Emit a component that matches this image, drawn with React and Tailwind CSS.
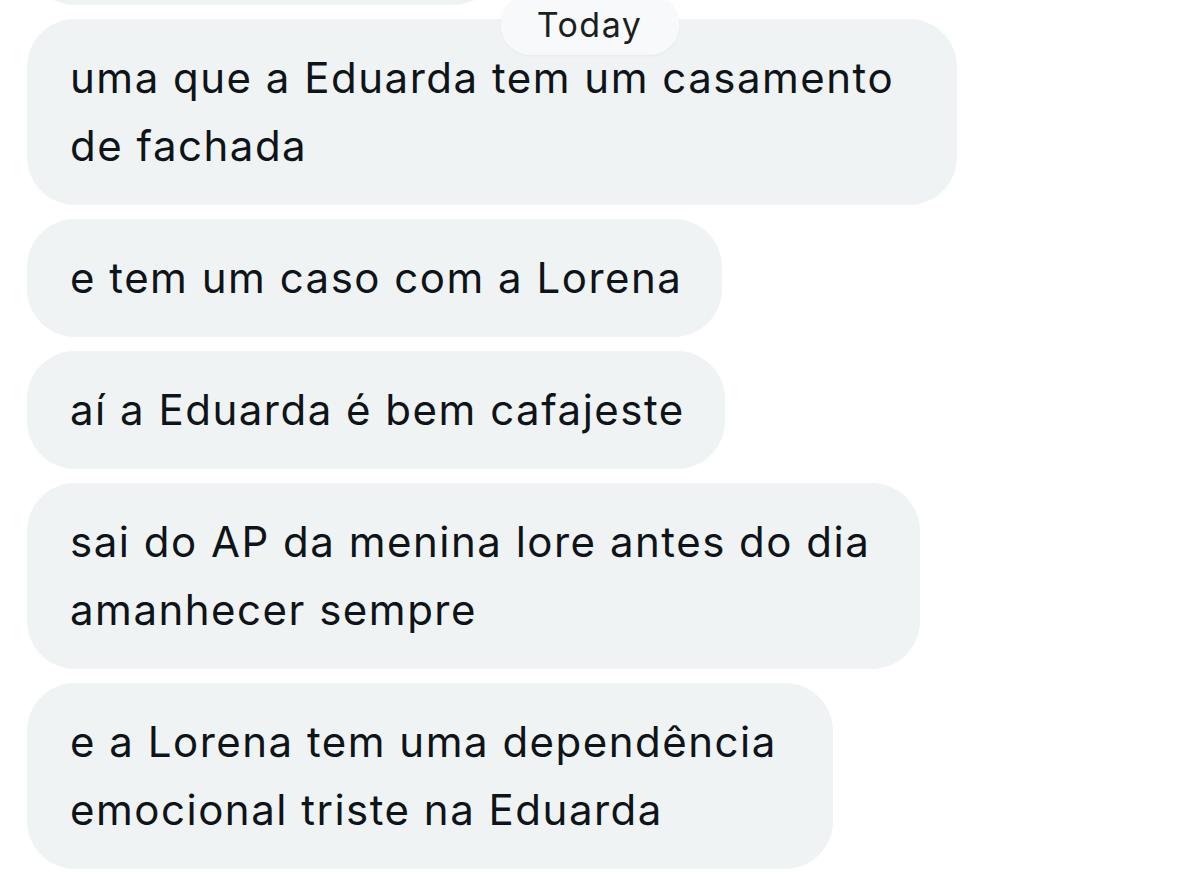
import React from "react";

const messages = [
    { lines: ["uma que a Eduarda tem um casamento", "de fachada"], width: "w-[930px]" },
    { lines: ["e tem um caso com a Lorena"], width: "w-[695px]" },
    { lines: ["aí a Eduarda é bem cafajeste"], width: "w-[698px]" },
    { lines: ["sai do AP da menina lore antes do dia", "amanhecer sempre"], width: "w-[893px]" },
    { lines: ["e a Lorena tem uma dependência", "emocional triste na Eduarda"], width: "w-[806px]" },
];

function Bubble({ lines, width }) {
    return (
        <div className={`${width} rounded-[48px] bg-[#eff3f4] pl-[43px] pr-[20px] py-[25px] text-[42px] leading-[68px] tracking-[1.5px] text-[#0f1419] whitespace-nowrap`}>
            {lines.map((line, i) => (
                <div key={i}>{line}</div>
            ))}
        </div>
    );
}

export default function App() {
    return (
        <div className="relative h-[874px] w-full overflow-hidden bg-white font-['Inter','Noto_Sans',sans-serif] antialiased">
            <div className="flex flex-col items-start gap-[14px] pl-[27px]">
                <div className="-mt-[113px] h-[118px] w-[474px] rounded-[48px] bg-[#eff3f4]" />
                {messages.map((m, i) => (
                    <Bubble key={i} lines={m.lines} width={m.width} />
                ))}
            </div>

            <div className="absolute left-1/2 top-[-6px] flex h-[61px] w-[179px] -translate-x-1/2 items-center justify-center rounded-full bg-[#f8f9fa] text-[34px] tracking-[1.5px] text-[#1c1f22] shadow-[0_1px_3px_rgba(0,0,0,0.04)]">
                Today
            </div>
        </div>
    );
}
